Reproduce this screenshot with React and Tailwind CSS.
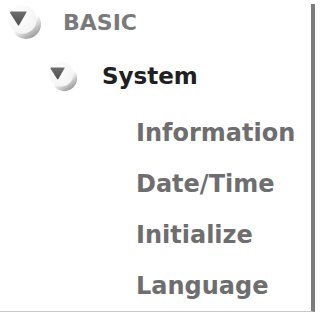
import React from 'react';

const ToggleIcon = ({ size, id }) => (
    <svg width={ size } height={ size } viewBox="0 0 36 36" className="shrink-0">
        <defs>
            <linearGradient id={ `${id}-ring` } x1="0.2" y1="0.1" x2="0.8" y2="1">
                <stop offset="0.45" stopColor="#ffffff" />
                <stop offset="0.8" stopColor="#b4b4b4" />
                <stop offset="1" stopColor="#8e8e8e" />
            </linearGradient>
            <radialGradient id={ `${id}-face` } cx="0.4" cy="0.35" r="0.75">
                <stop offset="0" stopColor="#ffffff" />
                <stop offset="1" stopColor="#f2f2f2" />
            </radialGradient>
            <linearGradient id={ `${id}-tri` } x1="0" y1="0" x2="0" y2="1">
                <stop offset="0" stopColor="#6e6e6e" />
                <stop offset="1" stopColor="#505050" />
            </linearGradient>
        </defs>
        <circle cx="20" cy="20" r="15" fill={ `url(#${id}-ring)` } />
        <circle cx="16.5" cy="15.5" r="14.2" fill={ `url(#${id}-face)` } />
        <path d="M4 8.5 Q4 7.5 5 7.5 L20 7.5 Q21 7.5 20.4 8.4 L13.2 21 Q12.5 22 11.8 21 L4.4 9.4 Z" fill={ `url(#${id}-tri)` } />
    </svg>
);

const items = ['Information', 'Date/Time', 'Initialize', 'Language'];

export default function App() {
    return (
        <div className="w-[321px] h-[314px] bg-white pt-1 overflow-hidden" style={ { fontFamily: '"DejaVu Sans", sans-serif' } }>
            <div className="w-[315px] h-[308px] border-r-4 border-b border-r-[#7d7d7d] border-b-[#c8c8c8] flex flex-col">
                <div className="h-[36px] flex items-center pl-[6px]">
                    <ToggleIcon size={ 36 } id="basic" />
                    <span className="ml-[21px] text-[22px] font-bold text-[#7a7a7a]">BASIC</span>
                </div>
                <div className="h-[36px] mt-[19px] flex items-center pl-[47px]">
                    <ToggleIcon size={ 31 } id="system" />
                    <span className="ml-[24px] text-[23px] font-bold text-[#202020]">System</span>
                </div>
                <div className="flex flex-col pl-[136px] mt-[14px]">
                    { items.map((item) => (
                        <div key={ item } className="h-[51px] leading-[51px] text-[24px] font-bold text-[#6e6e6e]">
                            { item }
                        </div>
                    )) }
                </div>
            </div>
        </div>
    );
}
